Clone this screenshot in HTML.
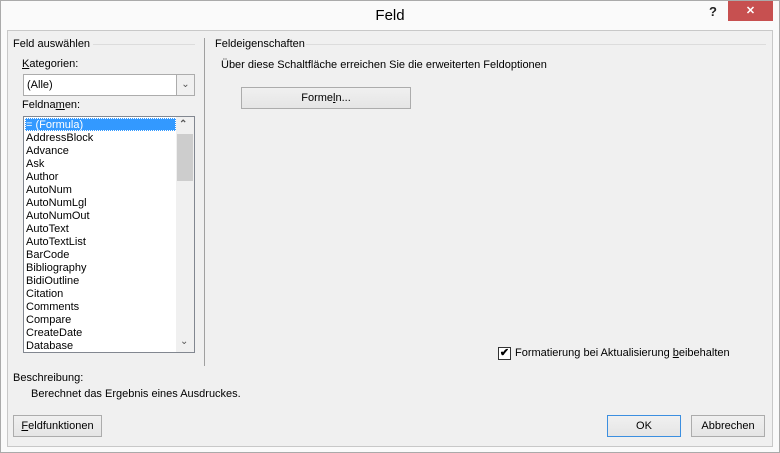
<!DOCTYPE html><html><head><style>
*{margin:0;padding:0;box-sizing:border-box}
body{width:780px;height:453px;background:#fff;font-family:"Liberation Sans",sans-serif;font-size:11px;color:#000;position:relative;overflow:hidden}
.a{position:absolute;white-space:nowrap}
.frame{position:absolute;left:0;top:0;width:780px;height:453px;border:1px solid #aaa;background:#fafafa}
.client{position:absolute;left:7px;top:30px;width:766px;height:417px;background:#f0f0f0;border:1px solid #c8c8c8}
.btn{position:absolute;height:22px;border:1px solid #acacac;background:linear-gradient(#f0f0f0,#e5e5e5);text-align:center;line-height:20px}
.li{position:absolute;left:2px;height:13px;line-height:14px}
</style></head><body>
<div class="frame"></div>
<div class="a" style="left:0;width:780px;top:7px;text-align:center;font-size:15px;color:#000">Feld</div>
<div class="a" style="left:709px;top:4px;font-size:13px;font-weight:bold;color:#222">?</div>
<div class="a" style="left:728px;top:1px;width:45px;height:20px;background:#c75050;color:#fff;text-align:center;font-size:11px;font-weight:bold;line-height:20px">✕</div>
<div class="client"></div>
<div class="a" style="left:13px;top:38px">Feld auswählen</div>
<div class="a" style="left:93px;top:44px;width:102px;height:1px;background:#dcdcdc"></div>
<div class="a" style="left:204px;top:38px;width:1px;height:328px;background:#a0a0a0"></div>
<div class="a" style="left:215px;top:38px">Feldeigenschaften</div>
<div class="a" style="left:306px;top:44px;width:460px;height:1px;background:#dcdcdc"></div>
<div class="a" style="left:22px;top:58px"><u>K</u>ategorien:</div>
<div class="a" style="left:23px;top:74px;width:172px;height:22px;background:#fff;border:1px solid #acacac"></div>
<div class="a" style="left:27px;top:79px">(Alle)</div>
<div class="a" style="left:176px;top:75px;width:18px;height:20px;border-left:1px solid #acacac;background:#f0f0f0;text-align:center;color:#555;font-size:10px;line-height:20px">&#8964;</div>
<div class="a" style="left:22px;top:99px">Feldna<u>m</u>en:</div>
<div class="a" style="left:23px;top:116px;width:172px;height:237px;background:#fff;border:1px solid #828790;overflow:hidden">
<div class="li" style="left:1px;top:1px;width:151px;background:#3399ff;color:#fff;padding-left:1px;outline:1px dotted #fff;outline-offset:-1px">= (Formula)</div>
<div class="li" style="top:14px">AddressBlock</div><div class="li" style="top:27px">Advance</div><div class="li" style="top:40px">Ask</div><div class="li" style="top:53px">Author</div><div class="li" style="top:66px">AutoNum</div><div class="li" style="top:79px">AutoNumLgl</div><div class="li" style="top:92px">AutoNumOut</div><div class="li" style="top:105px">AutoText</div><div class="li" style="top:118px">AutoTextList</div><div class="li" style="top:131px">BarCode</div><div class="li" style="top:144px">Bibliography</div><div class="li" style="top:157px">BidiOutline</div><div class="li" style="top:170px">Citation</div><div class="li" style="top:183px">Comments</div><div class="li" style="top:196px">Compare</div><div class="li" style="top:209px">CreateDate</div><div class="li" style="top:222px">Database</div>
<div class="a" style="left:152px;top:0;width:18px;height:235px;background:#f0f0f0"></div>
<div class="a" style="left:153px;top:17px;width:16px;height:47px;background:#cdcdcd"></div>
<div class="a" style="left:155px;top:2px;font-size:10px;color:#555;font-weight:bold">&#8963;</div>
<div class="a" style="left:156px;top:219px;font-size:10px;color:#555">&#8964;</div>
</div>
<div class="a" style="left:221px;top:59px">Über diese Schaltfläche erreichen Sie die erweiterten Feldoptionen</div>
<div class="btn" style="left:241px;top:87px;width:170px">Forme<u>l</u>n...</div>
<div class="a" style="left:498px;top:347px;width:13px;height:13px;background:#fff;border:1px solid #333;font-size:11px;line-height:11px;text-align:center;font-weight:bold">✔</div>
<div class="a" style="left:515px;top:347px">Formatierung bei Aktualisierung <u>b</u>eibehalten</div>
<div class="a" style="left:13px;top:372px">Beschreibung:</div>
<div class="a" style="left:31px;top:388px">Berechnet das Ergebnis eines Ausdruckes.</div>
<div class="btn" style="left:13px;top:415px;width:89px"><u>F</u>eldfunktionen</div>
<div class="btn" style="left:607px;top:415px;width:74px;border-color:#3c8fe0">OK</div>
<div class="btn" style="left:691px;top:415px;width:74px">Abbrechen</div>
</body></html>
